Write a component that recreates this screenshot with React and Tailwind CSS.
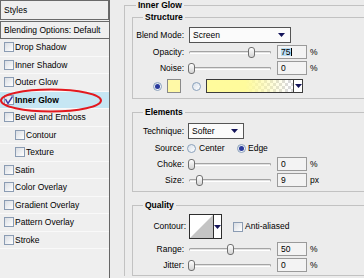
import React from 'react'

const styleRows = [
  { label: 'Drop Shadow' },
  { label: 'Inner Shadow' },
  { label: 'Outer Glow' },
  { label: 'Inner Glow', checked: true, active: true },
  { label: 'Bevel and Emboss' },
  { label: 'Contour', sub: true },
  { label: 'Texture', sub: true },
  { label: 'Satin' },
  { label: 'Color Overlay' },
  { label: 'Gradient Overlay' },
  { label: 'Pattern Overlay' },
  { label: 'Stroke' },
]

function Arrow() {
  return (
    <svg width="7" height="4" viewBox="0 0 7 4">
      <polygon points="0,0 7,0 3.5,4" fill="#14145a" />
    </svg>
  )
}

function Check({ checked }) {
  return (
    <span className="flex h-[10px] w-[10px] shrink-0 items-center justify-center border border-[#8b9cb3] bg-gradient-to-br from-[#d9dde3] to-white">
      {checked && (
        <svg width="8" height="8" viewBox="0 0 8 8">
          <polyline points="0.5,3 3,7.5 7.5,0.5" fill="none" stroke="#3b3ba8" strokeWidth="1.4" />
        </svg>
      )}
    </span>
  )
}

function Radio({ on }) {
  return (
    <span className="flex h-[9px] w-[9px] shrink-0 items-center justify-center rounded-full border border-[#8aa1bb] bg-gradient-to-br from-[#d7dfe9] to-white">
      {on && <span className="h-[5px] w-[5px] rounded-full bg-[#2a3a9c]" />}
    </span>
  )
}

function Title({ children, className }) {
  return (
    <span className={`absolute -top-[6px] bg-[#ececec] px-[2px] text-[8.5px] font-bold leading-[10px] ${className}`}>
      {children}
    </span>
  )
}

function Label({ children, w = 'w-[51px]' }) {
  return <span className={`${w} shrink-0 text-right`}>{children}</span>
}

function Slider({ pos }) {
  return (
    <div className="relative ml-[4px] h-[11px] w-[84px] shrink-0">
      <div className="absolute left-[1px] right-[1px] top-[4px] h-[3px] rounded-full border border-[#a4a4a4] border-b-white bg-[#e2e2e2]" />
      <div
        className="absolute top-0 h-[11px] w-[7px] rounded-[3px] border border-[#707070] bg-gradient-to-b from-white to-[#d4d4d4]"
        style={{ left: `${pos * 77}px` }}
      />
    </div>
  )
}

function Field({ value, selected }) {
  return (
    <div className="ml-[5px] flex h-[14px] w-[30px] shrink-0 items-center border border-[#9a9a9a] bg-[#f3f3f3] pl-[3px]">
      {selected ? (
        <span className="border-r border-black bg-[#b8dcf2] pr-[1px]">{value}</span>
      ) : (
        <span>{value}</span>
      )}
    </div>
  )
}

function SliderRow({ label, pos, value, unit = '%', selected, className = '' }) {
  return (
    <div className={`flex h-[14px] items-center ${className}`}>
      <Label>{label}</Label>
      <Slider pos={pos} />
      <Field value={value} selected={selected} />
      <span className="ml-[3px]">{unit}</span>
    </div>
  )
}

export default function App() {
  return (
    <div className="flex h-[278px] w-[364px] overflow-hidden bg-[#ececec] font-['Liberation_Sans',Arial,sans-serif] text-[8.5px] leading-none text-black">
      {/* styles list */}
      <div className="relative w-[110px] shrink-0 border-r border-[#666] bg-[#efefef]">
        <div className="flex h-[20px] items-center border border-[#6a6a6a] pl-[3px]">Styles</div>
        <div className="mt-[1px] flex h-[18px] items-center border-y border-l border-[#6a6a6a] pl-[3px]">
          Blending Options: Default
        </div>
        {styleRows.map((r) => (
          <div
            key={r.label}
            className={`flex h-[17.5px] items-center gap-[1px] border-b border-[#f9f9f9] ${r.sub ? 'pl-[15px]' : 'pl-[4px]'} ${r.active ? 'bg-[#c6e6f3] font-bold' : ''}`}
          >
            <Check checked={r.checked} />
            <span>{r.label}</span>
          </div>
        ))}
        <svg className="absolute left-0 top-[88px]" width="104" height="25" viewBox="0 0 104 25">
          <ellipse cx="51" cy="12.5" rx="50" ry="11" fill="none" stroke="#e3191f" strokeWidth="2" />
        </svg>
      </div>

      {/* options */}
      <div className="relative ml-[14px] mt-[5px] w-[270px] shrink-0 self-start border-l border-t border-[#c2c2c2] pl-[7px] pt-[11px]">
        <Title className="left-[11px]">Inner Glow</Title>

        <div className="relative border border-[#c2c2c2] pb-[5px] pt-[9px]">
          <Title className="left-[10px]">Structure</Title>
          <div className="flex h-[16px] items-center">
            <Label>Blend Mode:</Label>
            <div className="ml-[5px] flex h-[16px] w-[102px] items-center justify-between border border-[#555] bg-[#fbfbfb] pl-[3px] pr-[5px]">
              <span>Screen</span>
              <Arrow />
            </div>
          </div>
          <SliderRow className="mt-[2px]" label="Opacity:" pos={0.78} value="75" selected />
          <SliderRow className="mt-[2px]" label="Noise:" pos={0} value="0" />
          <div className="mt-[4px] flex h-[14px] items-center pl-[20px]">
            <Radio on />
            <span className="ml-[5px] h-[14px] w-[14px] border border-[#8a8a8a] bg-[#fff9a6]" />
            <span className="ml-[11px]">
              <Radio />
            </span>
            <div className="ml-[5px] flex h-[14px] w-[97px] border border-[#3c3c3c]">
              <div className="flex-1 bg-[image:repeating-conic-gradient(#dadada_0%_25%,#ffffff_0%_50%)] bg-[length:6px_6px]">
                <div className="h-full bg-gradient-to-r from-[#fffb9c] from-45% to-transparent to-95%" />
              </div>
              <div className="flex w-[9px] items-center justify-center border-l border-[#3c3c3c] bg-white">
                <Arrow />
              </div>
            </div>
          </div>
        </div>

        <div className="relative mt-[13px] border border-[#c2c2c2] pb-[4px] pt-[10px]">
          <Title className="left-[10px]">Elements</Title>
          <div className="flex h-[16px] items-center">
            <Label>Technique:</Label>
            <div className="ml-[4px] flex h-[16px] w-[56px] items-center justify-between border border-[#555] bg-[#fbfbfb] pl-[3px] pr-[5px]">
              <span>Softer</span>
              <Arrow />
            </div>
          </div>
          <div className="mt-[2px] flex h-[14px] items-center">
            <Label>Source:</Label>
            <div className="ml-[3px] flex w-[50px] items-center gap-[3px]">
              <Radio />
              <span>Center</span>
            </div>
            <Radio on />
            <span className="ml-[2px]">Edge</span>
          </div>
          <SliderRow className="mt-[2px]" label="Choke:" pos={0} value="0" />
          <SliderRow className="mt-[2px]" label="Size:" pos={0.1} value="9" unit="px" />
        </div>

        <div className="relative mt-[13px] border border-[#c2c2c2] pb-[3px] pt-[8px]">
          <Title className="left-[10px]">Quality</Title>
          <div className="flex h-[25px] items-center">
            <Label w="w-[53px]">Contour:</Label>
            <div className="ml-[3px] flex h-[25px] w-[33px] border border-[#2e2e2e] bg-white">
              <svg className="h-full flex-1" viewBox="0 0 23 23" preserveAspectRatio="none">
                <polygon points="0,23 23,0 23,23" fill="#c4c4c4" />
              </svg>
              <div className="flex w-[8px] items-center justify-center border-l border-[#2e2e2e]">
                <Arrow />
              </div>
            </div>
            <span className="ml-[11px]">
              <Check />
            </span>
            <span className="ml-[2px]">Anti-aliased</span>
          </div>
          <SliderRow className="mt-[3px]" label="Range:" pos={0.5} value="50" />
          <SliderRow className="mt-[2px]" label="Jitter:" pos={0} value="0" />
        </div>
      </div>
    </div>
  )
}
